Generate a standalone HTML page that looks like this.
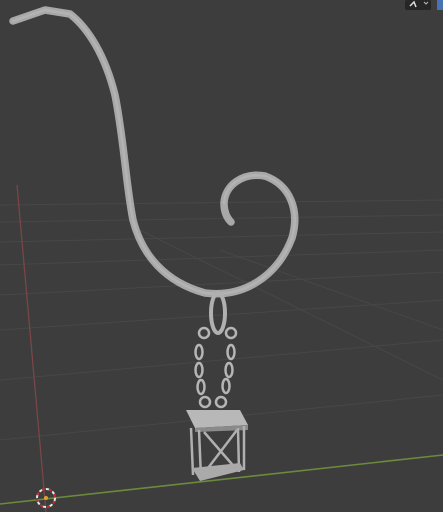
<!DOCTYPE html>
<html><head><meta charset="utf-8"><style>
html,body{margin:0;padding:0;background:#3d3d3d;overflow:hidden}
svg{display:block}
</style></head><body>
<svg width="443" height="512" viewBox="0 0 443 512" xmlns="http://www.w3.org/2000/svg">
<rect width="443" height="512" fill="#3d3d3d"/>
<g stroke="#474747" stroke-width="1" fill="none">
<line x1="0" y1="205" x2="443" y2="200"/>
<line x1="0" y1="222" x2="443" y2="215"/>
<line x1="0" y1="242" x2="443" y2="232"/>
<line x1="0" y1="265" x2="443" y2="250"/>
<line x1="0" y1="295" x2="443" y2="272"/>
<line x1="0" y1="330" x2="443" y2="300"/>
<line x1="0" y1="380" x2="443" y2="340"/>
<line x1="0" y1="440" x2="443" y2="395"/>
<line x1="140" y1="230" x2="443" y2="380"/>
<line x1="220" y1="250" x2="443" y2="330"/>
</g>
<line x1="17" y1="185" x2="46" y2="512" stroke="#7a4646" stroke-width="1.3"/>
<line x1="0" y1="504" x2="443" y2="455" stroke="#6c8a3c" stroke-width="1.6"/>
<circle cx="46" cy="498" r="9" fill="none" stroke="#e8e8e8" stroke-width="2" stroke-dasharray="4 3"/>
<circle cx="46" cy="498" r="9" fill="none" stroke="#c03030" stroke-width="2" stroke-dasharray="3 4" stroke-dashoffset="4"/>
<circle cx="46" cy="498" r="2" fill="#e0a030"/>
<path d="M13,21 L45,10 L70,14 C88,28 105,55 115,95 C124,140 126,185 133,220 C142,255 165,282 205,293 C245,298 278,275 292,238 C300,210 290,185 265,176 C243,172 225,185 224,203 C224,212 227,218 231,222" fill="none" stroke="#a8a8a8" stroke-width="7.5" stroke-linecap="round" stroke-linejoin="round"/>
<path d="M13,21 L45,10 L70,14 C88,28 105,55 115,95 C124,140 126,185 133,220 C142,255 165,282 205,293 C245,298 278,275 292,238 C300,210 290,185 265,176 C243,172 225,185 224,203" fill="none" stroke="#b3b3b3" stroke-width="2.5" stroke-linecap="round" stroke-linejoin="round"/>
<ellipse cx="218" cy="313" rx="7" ry="20" fill="none" stroke="#b0b0b0" stroke-width="4"/>
<g fill="none" stroke="#b5b5b5" stroke-width="2.5">
<ellipse cx="204" cy="333" rx="5" ry="5"/><ellipse cx="231" cy="333" rx="5" ry="5"/>
<ellipse cx="199" cy="352" rx="3.5" ry="7"/><ellipse cx="231" cy="352" rx="3.5" ry="7"/>
<ellipse cx="199" cy="370" rx="3.5" ry="7"/><ellipse cx="229" cy="370" rx="3.5" ry="7"/>
<ellipse cx="201" cy="387" rx="3.5" ry="7"/><ellipse cx="226" cy="386" rx="3.5" ry="7"/>
<ellipse cx="205" cy="402" rx="5" ry="5"/><ellipse cx="221" cy="402" rx="5" ry="5"/>
</g>
<polygon points="186,410 240,410 248,425 195,428" fill="#b8b8b8"/>
<polygon points="195,428 248,425 248,430 195,432" fill="#8a8a8a"/>
<g stroke="#b0b0b0" stroke-width="2.5">
<line x1="191" y1="428" x2="193" y2="475"/><line x1="199" y1="430" x2="201" y2="478"/>
<line x1="238" y1="428" x2="239" y2="472"/><line x1="244" y1="426" x2="244" y2="470"/>
<line x1="204" y1="432" x2="237" y2="470"/><line x1="237" y1="430" x2="205" y2="472"/>
</g>
<polygon points="192,468 240,463 244,470 200,481" fill="#aaaaaa"/>
<rect x="405" y="0" width="26" height="10" fill="#262626" rx="2"/>
<path d="M410,6 L414,2 L416,7" stroke="#ddd" fill="none" stroke-width="1.5"/>
<path d="M424,2 L426,4 L428,2" stroke="#bbb" fill="none" stroke-width="1"/>
<rect x="437" y="0" width="6" height="10" fill="#4772b3"/>
</svg>
</body></html>
